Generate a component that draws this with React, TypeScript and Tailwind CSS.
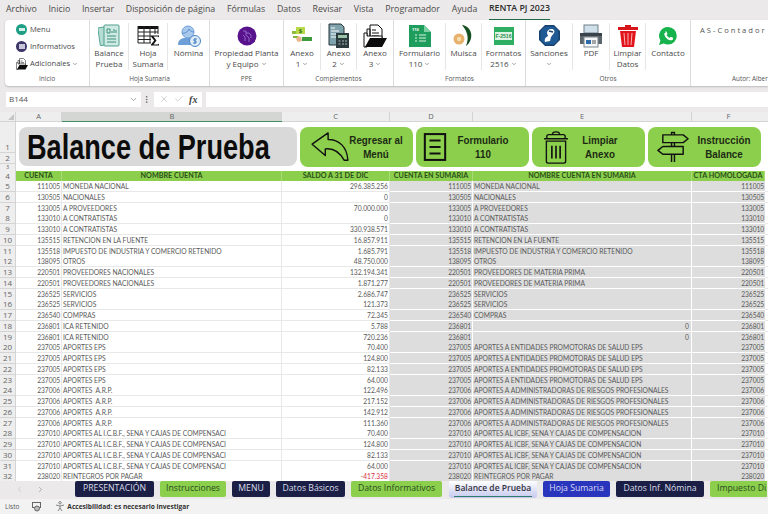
import { ReactNode } from "react";
import { ChevronDown, ChevronLeft, ChevronRight, Check, X, MoreVertical } from "lucide-react";

/* ---------- DATA ---------- */
const EPS = "APORTES A ENTIDADES PROMOTORAS DE SALUD EPS";
const ARP = "APORTES A ADMINISTRADORAS DE RIESGOS PROFESIONALES";
const ICBF = "APORTES AL I.C.B.F., SENA Y CAJAS DE COMPENSACI";
const ICBF2 = "APORTES AL ICBF, SENA Y CAJAS DE COMPENSACION";

// [fila, cuenta, nombre, saldo, cuenta sumaria, nombre sumaria]
const rows: [number, string, string, string, string, string][] = [
  [5, "111005", "MONEDA NACIONAL", "296.385.256", "111005", "MONEDA NACIONAL"],
  [6, "130505", "NACIONALES", "0", "130505", "NACIONALES"],
  [7, "133005", "A PROVEEDORES", "70.000.000", "133005", "A PROVEEDORES"],
  [8, "133010", "A CONTRATISTAS", "0", "133010", "A CONTRATISTAS"],
  [9, "133010", "A CONTRATISTAS", "330.938.571", "133010", "A CONTRATISTAS"],
  [10, "135515", "RETENCION EN LA FUENTE", "16.857.911", "135515", "RETENCION EN LA FUENTE"],
  [11, "135518", "IMPUESTO DE INDUSTRIA Y COMERCIO RETENIDO", "1.685.791", "135518", "IMPUESTO DE INDUSTRIA Y COMERCIO RETENIDO"],
  [12, "138095", "OTROS", "48.750.000", "138095", "OTROS"],
  [13, "220501", "PROVEEDORES NACIONALES", "132.194.341", "220501", "PROVEEDORES DE MATERIA PRIMA"],
  [14, "220501", "PROVEEDORES NACIONALES", "1.871.277", "220501", "PROVEEDORES DE MATERIA PRIMA"],
  [15, "236525", "SERVICIOS", "2.686.747", "236525", "SERVICIOS"],
  [16, "236525", "SERVICIOS", "121.373", "236525", "SERVICIOS"],
  [17, "236540", "COMPRAS", "72.345", "236540", "COMPRAS"],
  [18, "236801", "ICA RETENIDO", "5.788", "236801", ""],
  [19, "236801", "ICA RETENIDO", "720.236", "236801", ""],
  [20, "237005", "APORTES EPS", "70.400", "237005", EPS],
  [21, "237005", "APORTES EPS", "124.800", "237005", EPS],
  [22, "237005", "APORTES EPS", "82.133", "237005", EPS],
  [23, "237005", "APORTES EPS", "64.000", "237005", EPS],
  [24, "237006", "APORTES  A.R.P.", "122.496", "237006", ARP],
  [25, "237006", "APORTES  A.R.P.", "217.152", "237006", ARP],
  [26, "237006", "APORTES  A.R.P.", "142.912", "237006", ARP],
  [27, "237006", "APORTES  A.R.P.", "111.360", "237006", ARP],
  [28, "237010", ICBF, "70.400", "237010", ICBF2],
  [29, "237010", ICBF, "124.800", "237010", ICBF2],
  [30, "237010", ICBF, "82.133", "237010", ICBF2],
  [31, "237010", ICBF, "64.000", "237010", ICBF2],
  [32, "238020", "REINTEGROS POR PAGAR", "-417.358", "238020", "REINTEGROS POR PAGAR"],
];

const menus = ["Archivo", "Inicio", "Insertar", "Disposición de página", "Fórmulas", "Datos", "Revisar", "Vista", "Programador", "Ayuda"];

const NAVY = "bg-[#1b1f45] text-[#d9dbe8]";
const GREEN = "bg-[#8ccf4d] text-[#274a1b]";
const tabs = [
  { label: "PRESENTACIÓN", w: "w-[79px]", color: NAVY },
  { label: "Instrucciones", w: "w-[66px]", color: GREEN },
  { label: "MENU", w: "w-[38px]", color: NAVY },
  { label: "Datos Básicos", w: "w-[69px]", color: NAVY },
  { label: "Datos Informativos", w: "w-[91px]", color: GREEN },
];
const tabsAfter = [
  { label: "Hoja Sumaria", w: "w-[67px]", color: "bg-[#2a35bd] text-[#d9dcf5]" },
  { label: "Datos Inf. Nómina", w: "w-[88px]", color: NAVY },
];

const GRID = "grid grid-cols-[16px_46px_220px_108px_83px_219px_73px_3px]";

/* ---------- RIBBON ICONS ---------- */
const TealDoc = () => (
  <svg width="22" height="24" viewBox="0 0 22 24">
    <rect x="1" y="3" width="13" height="18" rx="1" fill="#b5dcd2" stroke="#5aa898" transform="rotate(-8 7 12)" />
    <rect x="6" y="1" width="15" height="21" rx="1" fill="#cfeae2" stroke="#4f9f8e" />
    <path d="M9 5h3v4H9zM14 7v2M16 5v4M18 6v3M9 12h9M9 15h9M9 18h9" stroke="#3f8f7e" fill="none" />
  </svg>
);
const SumTable = () => (
  <svg width="23" height="22" viewBox="0 0 23 22">
    <path d="M1 1h20v3H1z" fill="#111" />
    <path d="M1 1v17h13M21 1v8M1 7h20M1 11h13M1 14.5h13M7 1v17M13 1v17M18 1v8" stroke="#222" fill="none" />
    <path d="M14 10.5h8v2l-1-1h-4.5l3 4-3 4H21l1-1v2h-8v-1l3.2-4-3.2-4z" fill="#111" />
  </svg>
);
const People = () => (
  <svg width="24" height="24" viewBox="0 0 24 24">
    <path d="M1 21c0-5 3-7 7-7h6c3 0 5 2 5 7z" fill="#6f9fd8" />
    <circle cx="11" cy="8" r="6" fill="#a8c8ec" stroke="#6f9fd8" />
    <path d="M5 9c2 1 6-1 7-4 1 2 3 3 5 3" stroke="#5c8fcc" fill="none" />
    <circle cx="18" cy="17" r="5.5" fill="#dcebf8" stroke="#4d84c4" />
    <path d="M20 15h-3v2h2v2h-3M18 14v6" stroke="#3b74b8" fill="none" strokeWidth="0.8" />
  </svg>
);
const PurpleCircle = () => (
  <svg width="20" height="20" viewBox="0 0 20 20">
    <circle cx="10" cy="10" r="9.5" fill="#57128c" />
    <path d="M6 5h3v4l3 3v4M9 7h3l2 2v3M6 9l2 2v4" stroke="#9d6fd0" fill="none" strokeWidth="0.9" />
  </svg>
);
const Money = () => (
  <svg width="22" height="20" viewBox="0 0 22 20">
    <rect x="5" y="1" width="9" height="7" fill="#b7d948" />
    <rect x="1" y="5" width="4" height="3" fill="#8dbb3a" />
    <rect x="11" y="11" width="10" height="4" fill="#3f9a3d" />
    <rect x="2" y="10" width="5" height="2" fill="#7fb73a" />
    <path d="M7 10l3 1 1 4-4 1-2-3z" fill="#e9b48a" />
    <text x="9.5" y="7" fontSize="6" fontWeight="700" fill="#2d6a1f" textAnchor="middle">$</text>
  </svg>
);
const Calculator = () => (
  <svg width="22" height="26" viewBox="0 0 22 26">
    <path d="M1 1h12l3 3v18H1z" fill="#7fa3ad" stroke="#26353a" />
    <path d="M3 5h4M3 8h8M3 11h5M3 14h5" stroke="#fff" />
    <rect x="8" y="10" width="13" height="15" fill="#2b3a3d" />
    <rect x="10" y="12" width="9" height="3" fill="#9bc4a8" />
    <path d="M10.5 18h2M14 18h2M17 18h2M10.5 21h2M14 21h2M17 21h2" stroke="#a9bcbf" />
  </svg>
);
const FolderDoc = ({ size = 24 }: { size?: number }) => (
  <svg width={size} height={size} viewBox="0 0 24 24">
    <path d="M7 1h8l4 4v9H7z" fill="#fff" stroke="#111" />
    <path d="M4 5h3v10H4zM9 6h4M9 9h7M9 12h7" stroke="#111" fill="none" />
    <path d="M1 9h3v3h15v3H8l-4 8H1z" fill="#fff" stroke="#111" />
    <path d="M7 14h17l-5 9H2z" fill="#0c0c0c" />
  </svg>
);
const GreenForm = () => (
  <svg width="22" height="22" viewBox="0 0 22 22">
    <path d="M0 0h15l7 7v15H0z" fill="#1f9d5c" />
    <path d="M15 0l7 7h-7z" fill="#7fd0a4" />
    <path d="M6 10h2M10 10h7M6 13h2M10 13h7M6 16h2M10 16h7" stroke="#d8f2e3" />
    <text x="3" y="5.5" fontSize="4" fill="#fff" fontWeight="700">110</text>
  </svg>
);
const Muisca = () => (
  <svg width="24" height="22" viewBox="0 0 24 22">
    <path d="M10 0c10 1 13 14 4 21 3-7 2-14-4-21z" fill="#1d5a2a" />
    <path d="M11 1c6 4 7 12 3 20 6-5 7-15-3-20z" fill="#14481f" />
    <circle cx="7" cy="14" r="5.5" fill="#e7b06c" />
    <circle cx="7" cy="14" r="2.2" fill="#f6dcae" />
  </svg>
);
const Form2516 = () => (
  <div className="w-[20px] h-[18px] bg-[#2fae62] flex items-center justify-center">
    <span className="bg-[#dff3e4] text-[#1f8a4a] text-[5px] font-bold leading-[8px] px-[1px] font-['Liberation_Sans',sans-serif]">F-2516</span>
  </div>
);
const Sanciones = () => (
  <svg width="21" height="21" viewBox="0 0 21 21">
    <path d="M6 0h9l6 6v9l-6 6H6l-6-6V6z" fill="#17406d" />
    <path d="M6 1.5h9l4.5 4.5v9L15 19.5H6L1.5 15V6z" fill="#1f5a94" />
    <path d="M12 4c3 0 4 2 3 4l-3 4-1 4-5 1c-1-3 1-5 3-6l-1-3c0-2 2-4 4-4z" fill="#fff" />
    <path d="M10 6l4 1" stroke="#17406d" strokeWidth="1.4" />
  </svg>
);
const Printer = () => (
  <svg width="24" height="24" viewBox="0 0 24 24">
    <rect x="5" y="1" width="14" height="8" fill="#cfe0ea" stroke="#6f7f88" />
    <path d="M1 9h22v11H1z" fill="#5b666c" />
    <rect x="1" y="9" width="22" height="3" fill="#3a4349" />
    <rect x="5" y="13" width="14" height="10" fill="#f4f6f7" stroke="#7a858b" />
    <rect x="7" y="16" width="5" height="4" fill="#2f6aa8" />
    <path d="M13 17h4M13 19h4" stroke="#555" />
  </svg>
);
const RedBin = () => (
  <svg width="20" height="23" viewBox="0 0 20 23">
    <path d="M7 1h6v2h7v3H0V3h7z" fill="#d9151c" />
    <path d="M2 7h16l-2 16H4z" fill="#e2141c" />
    <path d="M6 9l1 12M10 9v12M14 9l-1 12" stroke="#f7b5b5" />
  </svg>
);
const Whats = () => (
  <svg width="18" height="18" viewBox="0 0 18 18">
    <path d="M9 0a8.8 8.8 0 0 1 0 17.6c-1.6 0-3-.4-4.3-1.1L0 18l1.4-4.6A8.8 8.8 0 0 1 9 0z" fill="#16b24b" />
    <path d="M6 4.5l1.5 0 1 2.4-1 1.2c.6 1.2 1.6 2.2 3 2.8l1.2-1.2 2.3 1v1.5c-.6 1-1.9 1.4-3 1-3-.9-5-3-5.7-5.8-.2-1 .5-1.8 1.7-1.9z" fill="#fff" />
  </svg>
);

/* ---------- SHEET BUTTON ICONS ---------- */
const BackArrow = () => (
  <svg width="40" height="32" viewBox="0 0 42 34" fill="none" stroke="#111" strokeWidth="1.5" strokeLinejoin="round">
    <path d="M19 2L2 14l14 12v-7c8-1 15 3 20 12h4C39 17 31 9 19 9z" />
  </svg>
);
const FormIcon = () => (
  <svg width="24" height="30" viewBox="0 0 26 32" fill="none" stroke="#111" strokeWidth="2.2">
    <rect x="2" y="2" width="22" height="28" />
    <path d="M7 9h12M7 16h12M7 23h12" />
  </svg>
);
const TrashIcon = () => (
  <svg width="26" height="33" viewBox="0 0 28 36" fill="none" stroke="#111" strokeWidth="1.5">
    <path d="M1 8.5h26M4 8.5V6c0-1 1-2 2-2h16c1 0 2 1 2 2v2.5M10 4c0-2 1-3 4-3s4 1 4 3" />
    <path d="M3.5 11h21v22c0 1-1 2-2 2h-17c-1 0-2-1-2-2z" />
    <path d="M9.5 16v14M14 16v14M18.5 16v14" strokeWidth="1.8" />
  </svg>
);
const SignIcon = () => (
  <svg width="32" height="32" viewBox="0 0 33 33" fill="none" stroke="#111" strokeWidth="1.5" strokeLinejoin="round">
    <path d="M6 4h21l5 4-5 4H6zM27 16H6l-5 4 5 4h21z" />
    <path d="M15 4V1.5h3V4M15 12v4M18 12v4M15 24v8M18 24v8" />
  </svg>
);

/* ---------- SMALL PARTS ---------- */
function RibbonItem({ icon, lines, w, chevron, last }: { icon: ReactNode; lines: string[]; w: string; chevron?: boolean; last?: boolean }) {
  return (
    <div className={`${w} h-[47px] flex flex-col items-center ${last ? "" : "border-r border-[#e6e6e6]"}`}>
      <div className="h-[25px] flex items-center justify-center">{icon}</div>
      <div className="text-[8px] leading-[10.5px] text-[#4a4a4a] text-center whitespace-nowrap">
        {lines.map((l, i) => (
          <div key={i} className="flex items-center justify-center gap-[2px] h-[10.5px]">
            {l}
            {chevron && i === lines.length - 1 && <ChevronDown size={6} strokeWidth={2} />}
          </div>
        ))}
      </div>
    </div>
  );
}

function RibbonGroup({ label, w, children }: { label: string; w: string; children: ReactNode }) {
  return (
    <div className={`${w} shrink-0 h-full flex flex-col border-r border-[#dcdcdc]`}>
      <div className="flex-1 flex pt-[3px]">{children}</div>
      <div className="h-[14px] text-center text-[6.5px] leading-[14px] text-[#555]">{label}</div>
    </div>
  );
}

function SheetButton({ icon, lines, iconBox, textBox }: { icon: ReactNode; lines: string[]; iconBox: string; textBox: string }) {
  return (
    <div className="w-[113px] h-[40px] shrink-0 rounded-[8px] bg-[#8ccf4d] flex items-center">
      <div className={`${iconBox} flex justify-center shrink-0`}>{icon}</div>
      <div className={`${textBox} shrink-0 flex flex-col items-center text-[11px] leading-[14px] font-bold text-[#1d2b14] font-['Liberation_Sans',sans-serif] scale-x-[0.89] whitespace-nowrap`}>
        {lines.map((l) => (
          <div key={l}>{l}</div>
        ))}
      </div>
    </div>
  );
}

function Tab({ label, w, color }: { label: string; w: string; color: string }) {
  return (
    <div className={`${w} ${color} h-[16px] rounded-[2px] shrink-0 flex items-center justify-center text-[8.7px] whitespace-nowrap`}>
      {label}
    </div>
  );
}

export default function App() {
  return (
    <div className="w-[768px] h-[514px] overflow-hidden flex flex-col bg-[#ebe9e9] font-['Open_Sans',sans-serif] text-[#444]">
      {/* MENU BAR */}
      <div className="h-[20px] shrink-0 flex items-center pl-[6px] gap-[11.7px] text-[8.8px] text-[#4b4b4b] whitespace-nowrap">
        {menus.map((m) => (
          <span key={m}>{m}</span>
        ))}
        <span className="h-full flex items-center font-semibold text-[#2c2c2c] border-b border-[#1f6b42] mb-[1px]">RENTA PJ 2023</span>
      </div>

      {/* RIBBON */}
      <div className="h-[66px] shrink-0 ml-[5px] bg-white rounded-l-[4px] shadow-[0_1px_2px_rgba(0,0,0,0.2)] flex overflow-hidden">
        <div className="w-[85px] shrink-0 h-full flex flex-col border-r border-[#dcdcdc]">
          <div className="flex-1 pl-[11px] pt-[2px] flex flex-col gap-[2px] text-[7.6px] text-[#4a4a4a]">
            <div className="h-[15px] flex items-center gap-[3px]">
              <span className="w-[11px] h-[11px] rounded-full bg-[#1f9e86] flex items-center justify-center">
                <span className="w-[6px] h-[3px] bg-[#d8f0ea]" />
              </span>
              Menu
            </div>
            <div className="h-[15px] flex items-center gap-[3px]">
              <span className="w-[11px] h-[11px] rounded-full bg-[#3d3668] flex items-center justify-center">
                <span className="w-[6px] h-[5px] bg-[#c7c5d8]" />
              </span>
              Informativos
            </div>
            <div className="h-[15px] flex items-center gap-[2px]">
              <FolderDoc size={12} />
              Adicionales
              <ChevronDown size={6} strokeWidth={2} />
            </div>
          </div>
          <div className="h-[14px] text-center text-[6.5px] leading-[14px] text-[#555]">Inicio</div>
        </div>

        <RibbonGroup label="Hoja Sumaria" w="w-[120px]">
          <RibbonItem icon={<TealDoc />} lines={["Balance", "Prueba"]} w="w-[39px]" />
          <RibbonItem icon={<SumTable />} lines={["Hoja", "Sumaria"]} w="w-[39px]" />
          <RibbonItem icon={<People />} lines={["Nómina"]} w="w-[41px]" last />
        </RibbonGroup>

        <RibbonGroup label="PPE" w="w-[74px]">
          <RibbonItem icon={<PurpleCircle />} lines={["Propiedad Planta", "y Equipo"]} w="w-[73px]" chevron last />
        </RibbonGroup>

        <RibbonGroup label="Complementos" w="w-[110px]">
          <RibbonItem icon={<Money />} lines={["Anexo", "1"]} w="w-[37px]" chevron />
          <RibbonItem icon={<Calculator />} lines={["Anexo", "2"]} w="w-[36px]" chevron />
          <RibbonItem icon={<FolderDoc />} lines={["Anexo", "3"]} w="w-[36px]" chevron last />
        </RibbonGroup>

        <RibbonGroup label="Formatos" w="w-[132px]">
          <RibbonItem icon={<GreenForm />} lines={["Formulario", "110"]} w="w-[52px]" chevron />
          <RibbonItem icon={<Muisca />} lines={["Muisca"]} w="w-[36px]" />
          <RibbonItem icon={<Form2516 />} lines={["Formatos", "2516"]} w="w-[43px]" chevron last />
        </RibbonGroup>

        <RibbonGroup label="Otros" w="w-[165px]">
          <RibbonItem icon={<Sanciones />} lines={["Sanciones", ""]} w="w-[47px]" chevron />
          <RibbonItem icon={<Printer />} lines={["PDF"]} w="w-[37px]" />
          <RibbonItem icon={<RedBin />} lines={["Limpiar", "Datos"]} w="w-[36px]" />
          <RibbonItem icon={<Whats />} lines={["Contacto"]} w="w-[44px]" last />
        </RibbonGroup>

        <div className="flex-1 min-w-0 flex flex-col justify-between pl-[9px] pt-[5px] whitespace-nowrap">
          <div className="text-[7.6px] tracking-[2px] text-[#555]">AS-Contador</div>
          <div className="text-[6.4px] leading-[14px] text-[#555] pl-[32px]">Autor: Alber</div>
        </div>
      </div>

      {/* FORMULA BAR */}
      <div className="h-[26px] shrink-0 flex items-center pl-[6px]">
        <div className="w-[135px] h-[15px] bg-white flex items-center justify-between pl-[3px] pr-[3px] text-[8px] text-[#555]">
          B144
          <ChevronDown size={9} className="text-[#888]" />
        </div>
        <MoreVertical size={9} className="mx-[1px] text-[#666]" />
        <div className="w-[48px] h-[15px] bg-white flex items-center justify-around px-[2px] text-[#c8c8c8] ml-[2px]">
          <X size={10} />
          <Check size={10} />
          <span className="text-[10px] italic font-bold text-[#444] font-['Liberation_Serif',serif]">fx</span>
        </div>
        <div className="flex-1 h-[15px] bg-white ml-[4px]" />
      </div>

      {/* SHEET */}
      <div className="h-[369px] shrink-0 bg-white overflow-hidden flex flex-col">
        {/* column headers */}
        <div className={`${GRID} h-[10px] bg-[#eeeeee] text-[7.5px] leading-[9px] text-center text-[#666] shrink-0`}>
          <div className="border-r border-[#d4d4d4] border-b flex items-end justify-end pr-[1px] pb-[1px]">
            <span className="w-0 h-0 border-l-[6px] border-l-transparent border-b-[6px] border-b-[#c4c4c4]" />
          </div>
          <div className="border-r border-b border-[#d4d4d4]">A</div>
          <div className="bg-[#d3d6d3] border-b border-[#3f8f63]">B</div>
          <div className="border-r border-b border-[#d4d4d4]">C</div>
          <div className="border-r border-b border-[#d4d4d4]">D</div>
          <div className="border-r border-b border-[#d4d4d4]">E</div>
          <div className="border-b border-[#d4d4d4]">F</div>
          <div className="border-b border-[#d4d4d4]" />
        </div>

        {/* rows 1-3 with the title and buttons */}
        <div className="h-[49px] shrink-0 flex">
          <div className="w-[16px] shrink-0 bg-[#eeeeee] border-r border-[#d4d4d4] flex flex-col text-[8px] text-center text-[#666]">
            <div className="h-[31px] flex items-end justify-center border-b border-[#d4d4d4] leading-[10px]">1</div>
            <div className="h-[11px] border-b border-[#d4d4d4] leading-[10px]">2</div>
            <div className="h-[7px] text-[5.5px] leading-[7px]">3</div>
          </div>
          <div className="flex-1 min-w-0 flex gap-[3px] pl-[3px] pt-[5px]">
            <div className="w-[278px] h-[39px] shrink-0 rounded-[8px] bg-[#d9d9d9] pl-[8px] flex items-center">
              <span className="text-[35px] font-bold text-[#0c0c0c] leading-none font-['Liberation_Sans',sans-serif] whitespace-nowrap origin-left scale-x-[0.775]">
                Balance de Prueba
              </span>
            </div>
            <SheetButton icon={<BackArrow />} lines={["Regresar al", "Menú"]} iconBox="ml-[9px] w-[42px]" textBox="w-[50px]" />
            <SheetButton icon={<FormIcon />} lines={["Formulario", "110"]} iconBox="ml-[4px] w-[30px]" textBox="w-[66px]" />
            <SheetButton icon={<TrashIcon />} lines={["Limpiar", "Anexo"]} iconBox="ml-[9px] w-[30px]" textBox="w-[58px]" />
            <SheetButton icon={<SignIcon />} lines={["Instrucción", "Balance"]} iconBox="ml-[8px] w-[34px]" textBox="w-[68px]" />
          </div>
        </div>

        {/* row 4 header */}
        <div className={`${GRID} h-[10px] shrink-0 text-[7.2px] leading-[10px] font-bold text-center text-[#2a4f1a] font-['Lato',sans-serif]`}>
          <div className="bg-[#eeeeee] border-r border-[#d4d4d4] font-normal text-[#666] font-['Open_Sans',sans-serif] text-[8px]">4</div>
          {["CUENTA", "NOMBRE CUENTA", "SALDO A 31 DE DIC", "CUENTA EN SUMARIA", "NOMBRE CUENTA EN SUMARIA", "CTA HOMOLOGADA"].map((h) => (
            <div key={h} className="bg-[#8ccf4d] border-r border-[#a9dc78] whitespace-nowrap overflow-hidden">
              {h}
            </div>
          ))}
        </div>

        {/* data rows */}
        {rows.map(([n, cta, nombre, saldo, sum, nomSum]) => (
          <div key={n} className={`${GRID} h-[10.75px] shrink-0 text-[6.7px] leading-[10px] text-[#5a5a5a] font-['Lato',sans-serif] whitespace-pre overflow-hidden`}>
            <div className="bg-[#eeeeee] border-r border-b border-[#d4d4d4] text-center text-[8px] font-['Open_Sans',sans-serif] text-[#666]">{n}</div>
            <div className="text-right pr-[1px] tracking-[-0.1px] border-r border-b border-[#e8e8e8]">{cta}</div>
            <div className="pl-[1px] border-r border-b border-[#e8e8e8]">{nombre}</div>
            <div className={`text-right pr-[1px] border-r border-b border-[#e8e8e8] ${saldo.startsWith("-") ? "text-[#d9323a]" : ""}`}>{saldo}</div>
            <div className="text-right pr-[1px] tracking-[-0.1px] bg-[#dddddd] border-r border-b border-white">{sum}</div>
            <div className={`bg-[#dddddd] border-r border-b border-white ${nomSum ? "pl-[1px]" : "text-right pr-[2px]"}`}>{nomSum || "0"}</div>
            <div className="text-right pr-[1px] tracking-[-0.1px] bg-[#dddddd] border-b border-white">{sum}</div>
            <div className="border-b border-[#e8e8e8]" />
          </div>
        ))}
      </div>

      {/* SHEET TABS */}
      <div className="h-[18px] shrink-0 flex items-start gap-[6px] overflow-hidden bg-[#ebe9e9]">
        <div className="w-[69px] shrink-0 h-[16px] flex items-center pl-[15px] gap-[12px] text-[#999]">
          <ChevronLeft size={9} className="text-[#c4c4c4]" />
          <ChevronRight size={9} />
        </div>
        {tabs.map((t) => (
          <Tab key={t.label} {...t} />
        ))}
        <div className="w-[88px] h-[17px] shrink-0 ml-[1px] flex flex-col items-center justify-between rounded-b-[3px] bg-gradient-to-b from-white to-[#c5c8ee] text-[8.5px] font-semibold text-[#33333f] whitespace-nowrap">
          <span className="leading-[13px]">Balance de Prueba</span>
          <span className="w-[78px] h-[1px] bg-[#2f7a6a] mb-[1px]" />
        </div>
        {tabsAfter.map((t) => (
          <Tab key={t.label} {...t} />
        ))}
        <div className={`w-[57px] ${GREEN} h-[16px] rounded-l-[2px] shrink-0 flex items-center pl-[7px] text-[8.7px] whitespace-nowrap`}>
          Impuesto Di
        </div>
      </div>

      {/* STATUS BAR */}
      <div className="flex-1 bg-[#f3f2f2] flex items-center pl-[5px] text-[6.5px] text-[#555]">
        <span>Listo</span>
        <svg className="ml-[13px]" width="9" height="10" viewBox="0 0 9 10" fill="none" stroke="#666">
          <rect x="0.5" y="0.5" width="8" height="5" />
          <circle cx="5" cy="6.5" r="2.5" fill="#bbb" />
        </svg>
        <svg className="ml-[14px]" width="11" height="11" viewBox="0 0 11 11" fill="none" stroke="#777" strokeWidth="0.9">
          <circle cx="5" cy="1.8" r="1.2" />
          <path d="M1 4l4 1 4-1M5 5v2l-2 3M5 7l2 3" />
        </svg>
        <span className="ml-[1px] font-bold text-[#333] text-[6.6px]">Accesibilidad: es necesario investigar</span>
      </div>
    </div>
  );
}
